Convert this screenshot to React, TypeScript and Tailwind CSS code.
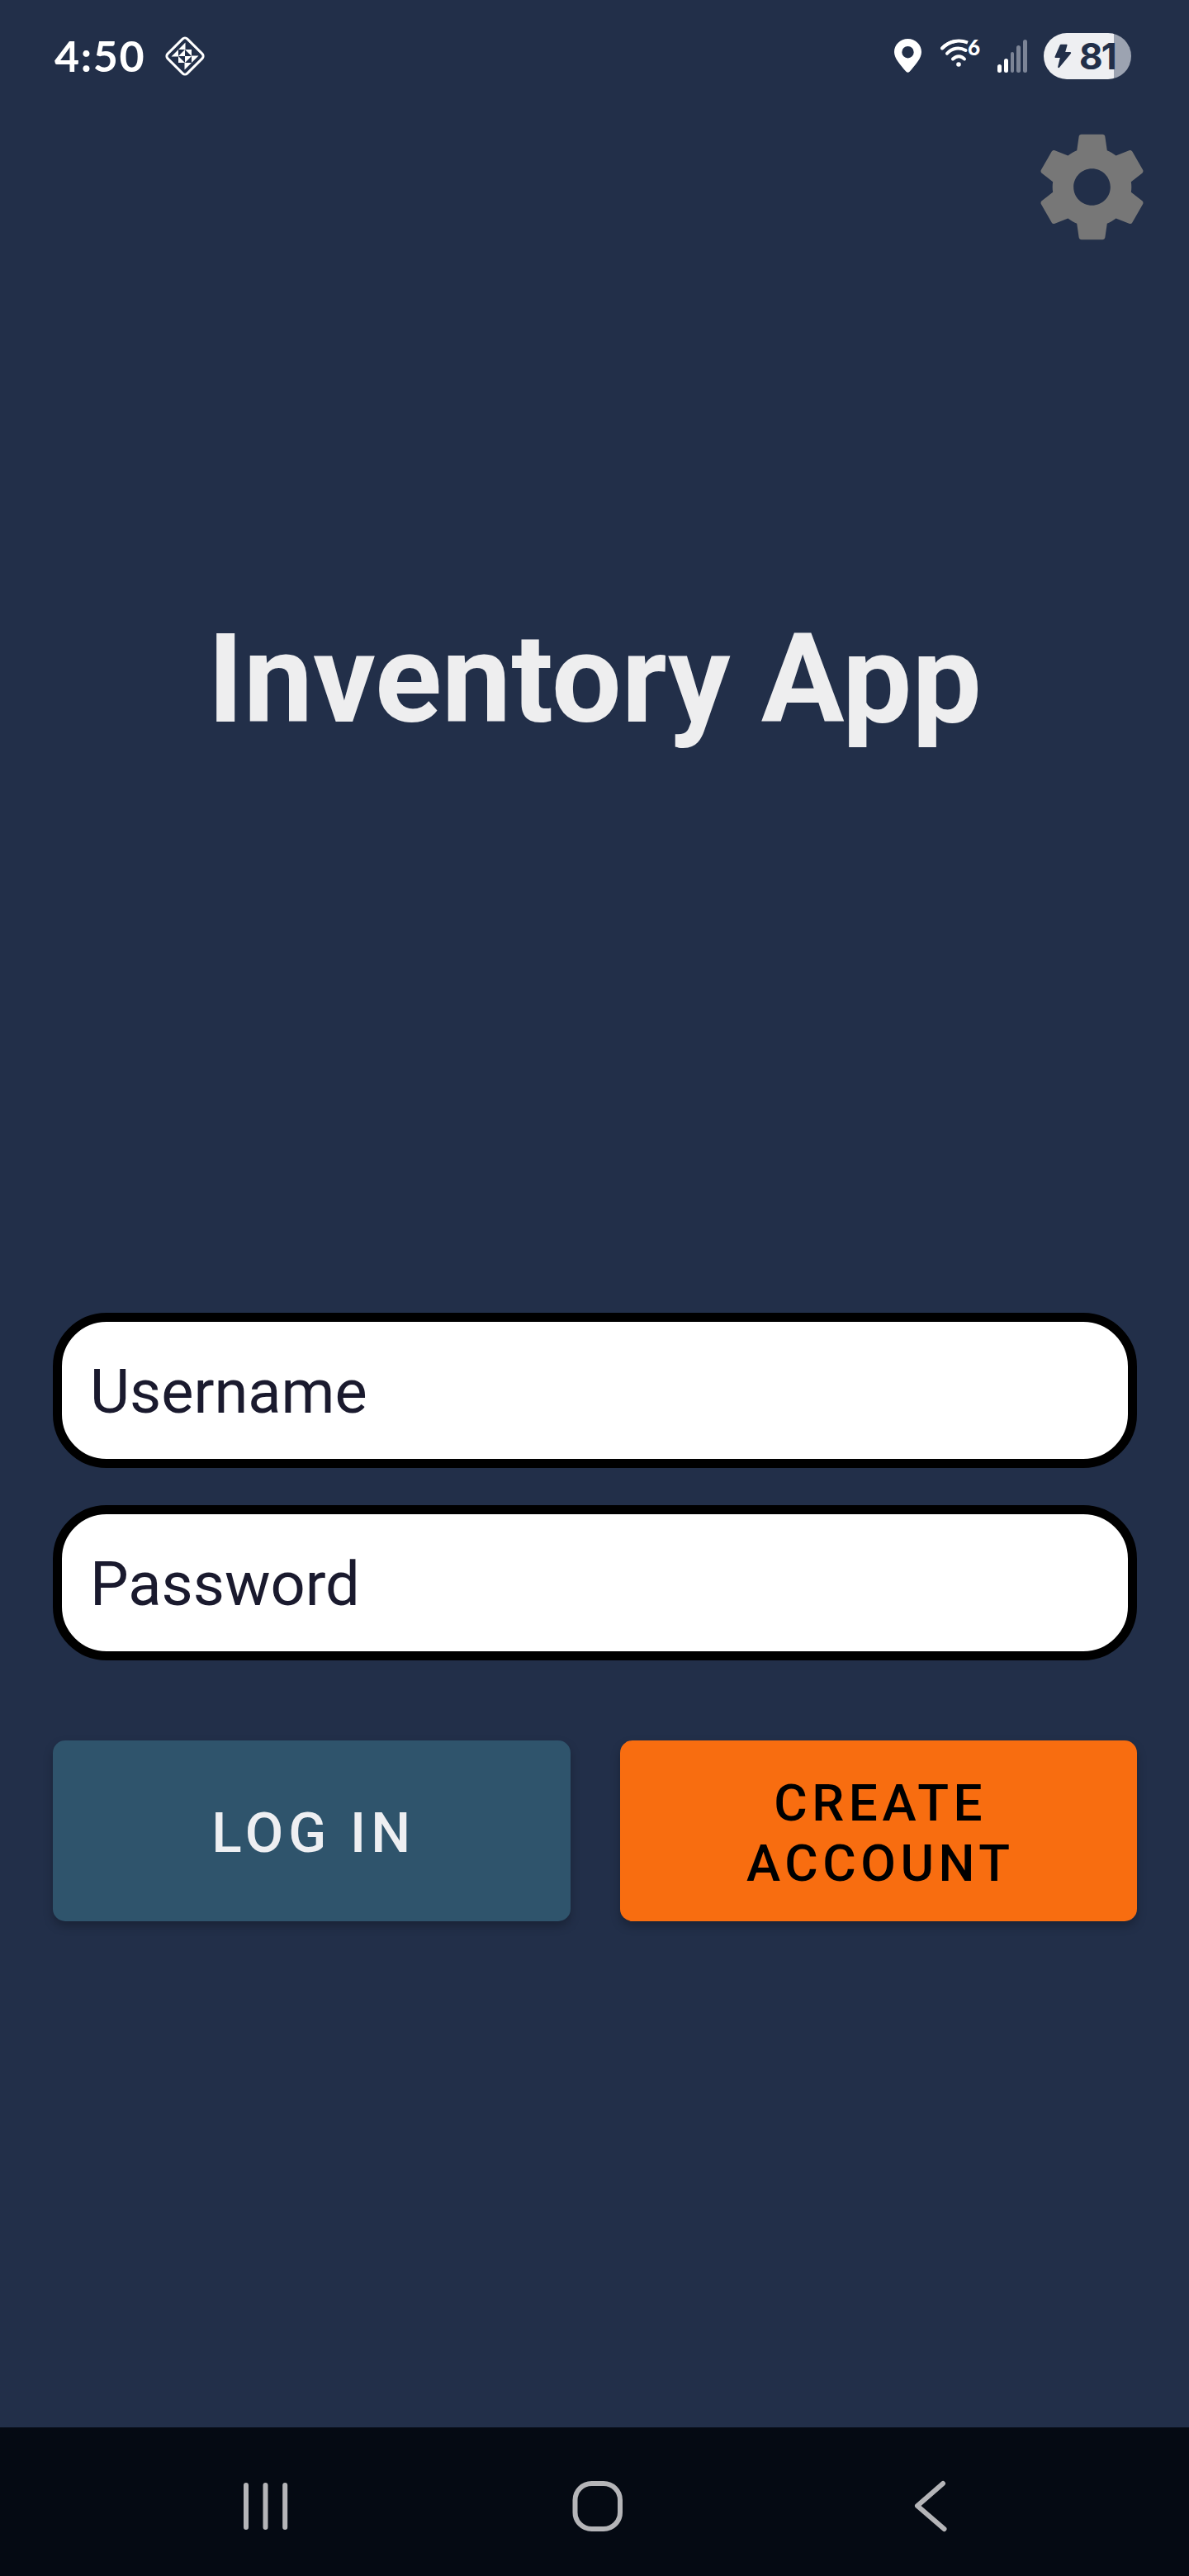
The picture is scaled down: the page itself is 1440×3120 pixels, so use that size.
import React from "react";

function StatusBar() {
  return (
    <header className="flex h-[136px] items-center justify-between pr-[70px] pl-[66px] text-white">
      <div className="flex items-center">
        <span className="mb-[2px] w-[132px] font-['Lato',sans-serif] text-[52px] leading-[62px] font-bold tracking-[1.600px]">4:50</span>
        <svg width="52" height="52" viewBox="-26 -26 52 52" fill="none">
          <rect x="-16.800" y="-16.800" width="33.600" height="33.600" rx="4" transform="rotate(45)" stroke="white" strokeWidth="3" />
          <path
            fill="white"
            d="M.5-16.500V-8H-8ZM-16.500.5-8-8V.5ZM16.500-.5 8 8V-.5ZM-.5 16.500V8H8ZM0-8V0H-8ZM0 8V0H8ZM0-8H8V0ZM-8 0V8H0Z"
          />
        </svg>
      </div>
      <div className="flex items-center">
        <svg width="34" height="42" viewBox="0 0 34 42" className="mr-[22px]">
          <path fillRule="evenodd" fill="white" d="M16.500 0C7.400 0 0 7.100 0 16c0 7.600 7.200 15.500 14.400 23.700 1.300 1.500 2.900 1.500 4.200 0C25.800 31.500 33 23.600 33 16 33 7.100 25.600 0 16.500 0Zm0 9a7.200 7.200 0 1 1 0 14.400 7.200 7.200 0 0 1 0-14.400Z" />
        </svg>
        <div className="relative mr-[19px] h-[42px] w-[50px]">
          <svg width="50" height="42" viewBox="0 0 50 42" fill="none" stroke="white" strokeWidth="4" strokeLinecap="round">
            <path d="M2 11.500C11 1.800 23 .6 33 4.600" strokeLinecap="butt" />
            <path d="M2 11.500C7 6.500 12 3.900 18 3" />
            <path d="M8 17.800C14 11 23 9.800 30.500 14" />
            <path d="M15 24.500C19.500 20 25 20 29 24.500" />
            <circle cx="22" cy="31" r="2.800" fill="white" stroke="none" />
          </svg>
          <span className="absolute -top-[5px] left-[33px] font-['Lato',sans-serif] text-[26px] leading-[30px] font-black">6</span>
        </div>
        <div className="mr-[20px] flex h-[40px] items-end gap-[3px]">
          <i className="h-[10px] w-[4.800px] rounded-full bg-white" />
          <i className="h-[17px] w-[4.800px] rounded-full bg-white" />
          <i className="h-[25px] w-[4.800px] rounded-full bg-[#7c8496]" />
          <i className="h-[33px] w-[4.800px] rounded-full bg-[#7c8496]" />
          <i className="h-[40px] w-[4.800px] rounded-full bg-[#7c8496]" />
        </div>
        <div className="flex h-[56px] w-[106px] items-center rounded-full bg-[linear-gradient(to_right,#eeeff2_85px,#9ca3b1_85px)] pl-[13px] text-[#222f49]">
          <svg width="21" height="30" viewBox="0 0 21 30" fill="currentColor">
            <path d="M8 .8h6.500c.8 0 1.200.5 1 1.200L13.200 10H19c1.200 0 1.600 1.200.8 2L6.200 28.500c-1 1.200-2.300.6-2-.8L6.800 17H1.600C.6 17 .3 16.300.6 15.500L6.500 2c.3-.8.8-1.200 1.500-1.200Z" />
          </svg>
          <span className="ml-[9px] font-['Inter',sans-serif] text-[44px] leading-[56px] font-bold tracking-[-2px]">81</span>
        </div>
      </div>
    </header>
  );
}

function Field({ label }: { label: string }) {
  return (
    <div className="flex h-[188px] items-center rounded-[65px] border-[11px] border-black bg-white pt-[3px] pl-[34px] text-[74px] leading-[88px] text-[#1a1a2e]">
      {label}
    </div>
  );
}

export default function App() {
  return (
    <div className="flex h-[3120px] w-[1440px] flex-col overflow-hidden bg-[#222f49] font-['Roboto',sans-serif]">
      <StatusBar />
      <div className="mt-[14px] flex justify-end pr-[41px]">
        <svg width="153" height="153" viewBox="0 0 24 24" fill="#777777">
          <path d="M19.430 12.980c.04-.32.070-.64.070-.98s-.03-.66-.07-.98l2.110-1.650c.19-.15.240-.42.120-.64l-2-3.460c-.12-.22-.39-.3-.61-.22l-2.490 1c-.52-.4-1.080-.73-1.690-.98l-.38-2.650C14.460 2.180 14.250 2 14 2h-4c-.25 0-.46.18-.49.420l-.38 2.650c-.61.25-1.170.59-1.690.98l-2.490-1c-.23-.09-.49 0-.61.22l-2 3.460c-.13.220-.07.490.12.640l2.110 1.650c-.04.320-.07.650-.07.980s.03.660.07.980l-2.110 1.650c-.19.150-.24.420-.12.640l2 3.460c.12.220.39.300.61.220l2.490-1c.52.400 1.080.730 1.690.980l.38 2.650c.03.240.24.420.49.420h4c.25 0 .46-.18.490-.42l.38-2.650c.61-.25 1.170-.59 1.690-.98l2.490 1c.23.090.49 0 .61-.22l2-3.460c.12-.22.070-.49-.12-.64l-2.110-1.650zM12 15.500c-1.930 0-3.500-1.570-3.500-3.500s1.570-3.500 3.500-3.500 3.500 1.570 3.500 3.500-1.570 3.500-3.500 3.500z" />
        </svg>
      </div>
      <h1 className="mt-[432px] text-center text-[150px] leading-[176px] font-bold text-[#eeeeef]">Inventory App</h1>
      <main className="mt-[679px] flex flex-col pr-[63px] pl-[64px]">
        <div className="flex flex-col gap-[45px]">
          <Field label="Username" />
          <Field label="Password" />
        </div>
        <div className="mt-[97px] grid grid-cols-2 gap-[60px] font-medium">
          <button className="h-[219px] rounded-[15px] bg-[#2f546c] pt-[4px] pl-[5px] text-[67.500px] leading-[79px] tracking-[6.030px] text-[#eeeff2] shadow-[0_6px_12px_rgba(0,0,0,0.25)]">
            LOG IN
          </button>
          <button className="h-[219px] rounded-[15px] bg-[#f86d10] pt-[4px] pl-[5px] text-[62px] leading-[73px] tracking-[5.540px] text-black shadow-[0_6px_12px_rgba(0,0,0,0.25)]">
            CREATE
            <br />
            ACCOUNT
          </button>
        </div>
      </main>
      <nav className="mt-auto flex h-[180px] bg-[#050a13] pt-[60px] pl-[290px] text-[#b5b5b8]">
        <svg width="64" height="70" viewBox="0 0 64 70" stroke="currentColor" strokeWidth="6" strokeLinecap="round">
          <path d="M8 10v51M31.500 10v51M55.200 10v51" />
        </svg>
        <svg width="70" height="76" viewBox="0 0 70 76" className="ml-[334px]" fill="none" stroke="currentColor" strokeWidth="6">
          <rect x="8.500" y="8" width="54.500" height="55" rx="20" />
        </svg>
        <svg width="60" height="76" viewBox="0 0 60 76" className="ml-[340px]" fill="none" stroke="currentColor" strokeWidth="6" strokeLinecap="round" strokeLinejoin="round">
          <path d="M44 8L13 35L45.500 63" />
        </svg>
      </nav>
    </div>
  );
}
